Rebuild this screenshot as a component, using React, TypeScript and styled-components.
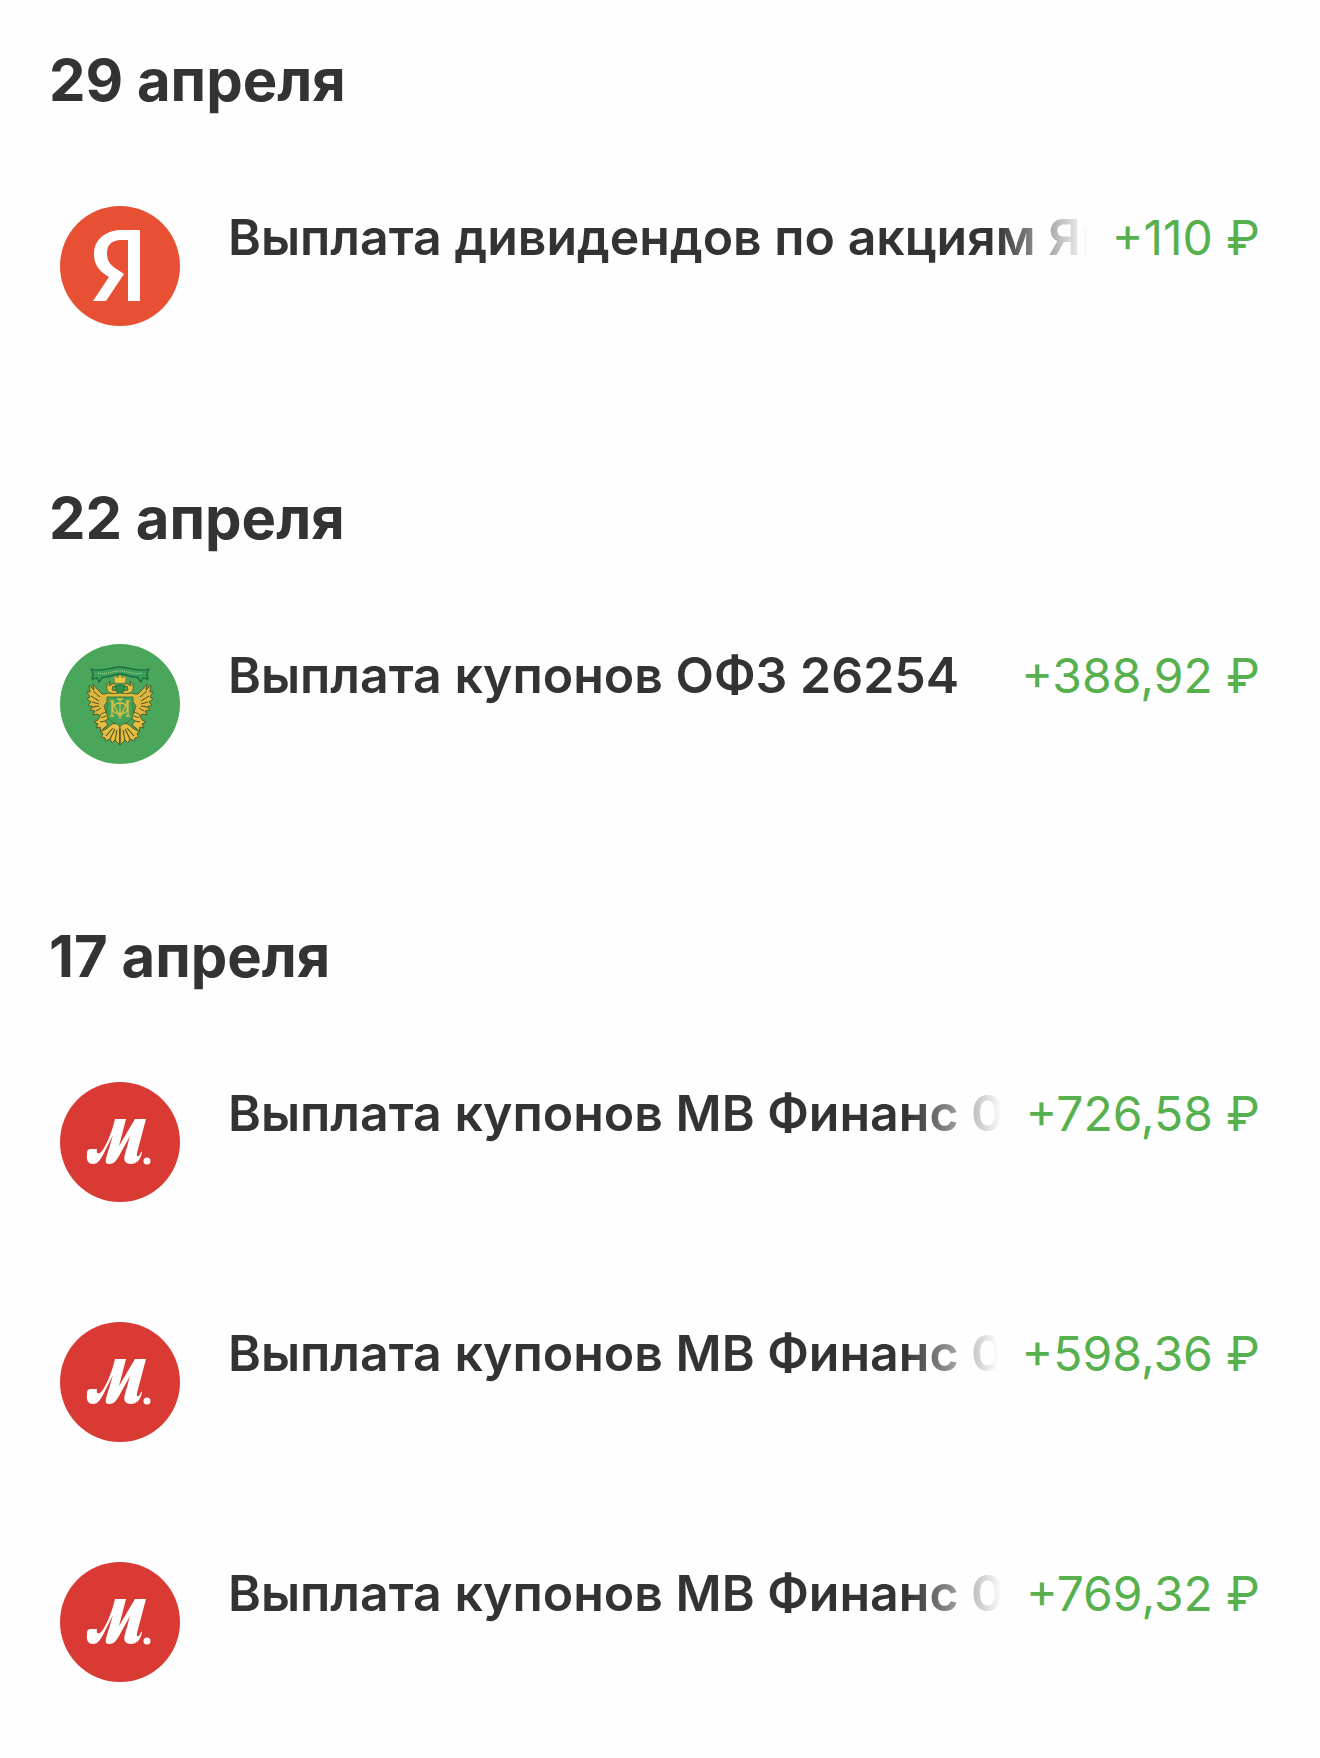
import React from 'react';
import styled, { createGlobalStyle } from 'styled-components';

type LogoKind = 'yandex' | 'minfin' | 'mvideo';

interface Payment {
  id: string;
  logo: LogoKind;
  title: string;
  amount: string;
  faded?: boolean;
}

interface Day {
  date: string;
  payments: Payment[];
}

const days: Day[] = [
  {
    date: '29 апреля',
    payments: [{ id: 'ya', logo: 'yandex', title: 'Выплата дивидендов по акциям Ян', amount: '+110 ₽', faded: true }],
  },
  {
    date: '22 апреля',
    payments: [{ id: 'ofz', logo: 'minfin', title: 'Выплата купонов ОФЗ 26254', amount: '+388,92 ₽' }],
  },
  {
    date: '17 апреля',
    payments: [
      { id: 'mv1', logo: 'mvideo', title: 'Выплата купонов МВ Финанс 0', amount: '+726,58 ₽', faded: true },
      { id: 'mv2', logo: 'mvideo', title: 'Выплата купонов МВ Финанс 0', amount: '+598,36 ₽', faded: true },
      { id: 'mv3', logo: 'mvideo', title: 'Выплата купонов МВ Финанс 0', amount: '+769,32 ₽', faded: true },
    ],
  },
];

const logoColors: Record<LogoKind, string> = {
  yandex: '#e85033',
  minfin: '#49a65b',
  mvideo: '#d93a34',
};

const GlobalStyle = createGlobalStyle`
  *, *::before, *::after {
    box-sizing: border-box;
  }

  body {
    margin: 0;
    background: #fefefe;
    color: #333333;
    font-family: Inter, "Liberation Sans", sans-serif;
  }
`;

const Feed = styled.main`
  display: flex;
  flex-direction: column;
  gap: 156px;
  padding: 44px 60px 76px 49px;
`;

const DaySection = styled.section`
  display: flex;
  flex-direction: column;
  gap: 90px;
`;

const DayTitle = styled.h2`
  margin: 0;
  font-size: 58px;
  line-height: 72px;
  font-weight: 700;
`;

const PaymentList = styled.ul`
  display: flex;
  flex-direction: column;
  gap: 120px;
  margin: 0;
  padding: 0 0 0 11px;
  list-style: none;
`;

const PaymentRow = styled.li`
  display: flex;
  align-items: flex-start;
`;

const Logo = styled.span<{ $kind: LogoKind }>`
  flex: none;
  width: 120px;
  height: 120px;
  margin-right: 48px;
  border-radius: 50%;
  background: ${({ $kind }) => logoColors[$kind]};

  svg {
    display: block;
    width: 100%;
    height: 100%;
  }
`;

const PaymentTitle = styled.span<{ $faded?: boolean }>`
  flex: 1;
  min-width: 0;
  overflow: hidden;
  white-space: nowrap;
  font-size: 50px;
  line-height: 62px;
  font-weight: 600;
  ${({ $faded }) => $faded && 'mask-image: linear-gradient(to right, #000 calc(100% - 92px), transparent);'}
`;

const Amount = styled.span`
  flex: none;
  margin-left: 24px;
  white-space: nowrap;
  font-size: 48px;
  line-height: 64px;
  font-weight: 400;
  color: #57b04e;
`;

const YandexMark: React.FC = () => (
  <svg viewBox="0 0 120 120" aria-hidden="true">
    <path
      fill="#fff"
      fillRule="evenodd"
      d="M80 24H62C45 24 34 34 34 48C34 59 39 65 49 71L33 95H46L64 68L58 64C50 59 47 55 47 47C47 39 52 34 61 34H68V95H80Z"
    />
  </svg>
);

// left half of the eagle, the right one is the same drawing mirrored around x=60
const WingHalf: React.FC = () => (
  <g stroke="#4f5420" strokeWidth="0.9" strokeLinejoin="round">
    <path
      fill="#ddb640"
      d="M48 50L42 50L38 46L33 40L34 46L29 41L30 48L27 48L30 53L27 55L31 58L28 61L33 63L30 66L35 67L33 71L38 70L41 73L46 68L44 62L48 57Z"
    />
    <path fill="none" strokeWidth="1" d="M33 47L40 53M31 52L39 57M32 58L39 60M33 63L39 62M36 67L41 64" />
    <path fill="#e6bf42" d="M57 50L50 49C45 46 46 40 50 37L49 42L54 39L57 43L53 42L52 46L57 47Z" />
    <path fill="#e6bf42" d="M46 68L41 70L38 76L34 78L38 80L36 84L40 83L41 88L44 84L48 81L45 77L49 74Z" />
    <path fill="none" strokeWidth="1" d="M40 78L45 77M41 74L46 72" />
    <path
      fill="#e6bf42"
      d="M59 79L52 80L46 85L41 87L43 90L41 93L45 94L46 97L50 95L52 99L55 96L60 101V79Z"
    />
    <path fill="none" strokeWidth="1.1" d="M46 92L53 84M50 95L55 85M55 97L57 86M60 84V99" />
  </g>
);

const MinfinMark: React.FC = () => (
  <svg viewBox="0 0 120 120" aria-hidden="true">
    <WingHalf />
    <g transform="translate(120 0) scale(-1 1)">
      <WingHalf />
    </g>
    <path fill="#e0b83c" d="M46 50H74V54H46Z" />
    <path fill="#45a257" stroke="#2c6e38" strokeWidth="0.8" d="M47 53H73V71C73 76 67 78 60 82C53 78 47 76 47 71Z" />
    <path
      fill="none"
      stroke="#dcc04a"
      strokeWidth="1.3"
      d="M52 57V72M68 57V72M52 57L60 73L68 57M50 57H54M66 57H70M50 72H54M66 72H70M60 55V75M57 55H63M60 59C50 59 50 70 60 70C70 70 70 59 60 59Z"
    />
    <path fill="#2f9248" stroke="#1f6b3a" strokeWidth="0.8" d="M56 42L60 40L64 42V46L60 49L56 46Z" />
    <path fill="#f0c843" stroke="#8b7a28" strokeWidth="0.6" d="M54 32L58 34L60 30L62 34L66 32L65 39H55Z" />
    <path
      fill="#389e58"
      stroke="#1c6c40"
      strokeWidth="1.3"
      strokeLinejoin="round"
      d="M31 25C42 29 50 23 60 23C70 23 78 29 89 25L87 30L88 35L83 34L81 38L77 33C70 34 67 30 60 30C53 30 50 34 43 33L39 38L37 34L32 35L33 30Z"
    />
    <path fill="none" stroke="#b5d493" strokeWidth="1.2" strokeDasharray="1 1" d="M38 29C47 31 51 27 60 27C69 27 73 31 82 29" />
  </svg>
);

const MvideoMark: React.FC = () => (
  <svg viewBox="0 0 120 120" aria-hidden="true">
    <path
      fill="#fff"
      d="M55 37H66L59 64L75 37H86L77 71C76 75 79 76 81 70H82C81 77 77 82 71 82C65 82 63 78 65 72L70 54L59 74C56 79 54 82 49 82C45 82 45 79 47 73L53 53L44 71C40 79 37 82 33 82C28 82 26 78 27 72C27 68 28 67 31 67H37C36 71 38 73 41 70C46 65 52 50 55 37Z"
    />
    <circle cx="87" cy="79" r="3.5" fill="#fff" />
  </svg>
);

const marks: Record<LogoKind, React.FC> = {
  yandex: YandexMark,
  minfin: MinfinMark,
  mvideo: MvideoMark,
};

const PaymentItem: React.FC<{ payment: Payment }> = ({ payment }) => {
  const Mark = marks[payment.logo];

  return (
    <PaymentRow>
      <Logo $kind={payment.logo}><Mark /></Logo>
      <PaymentTitle $faded={payment.faded}>{payment.title}</PaymentTitle>
      <Amount>{payment.amount}</Amount>
    </PaymentRow>
  );
};

const App: React.FC = () => (
  <>
    <GlobalStyle />
    <Feed>
      {days.map((day: Day) => (
        <DaySection key={day.date}>
          <DayTitle>{day.date}</DayTitle>
          <PaymentList>
            {day.payments.map((payment: Payment) => <PaymentItem key={payment.id} payment={payment} />)}
          </PaymentList>
        </DaySection>
      ))}
    </Feed>
  </>
);

export default App;
